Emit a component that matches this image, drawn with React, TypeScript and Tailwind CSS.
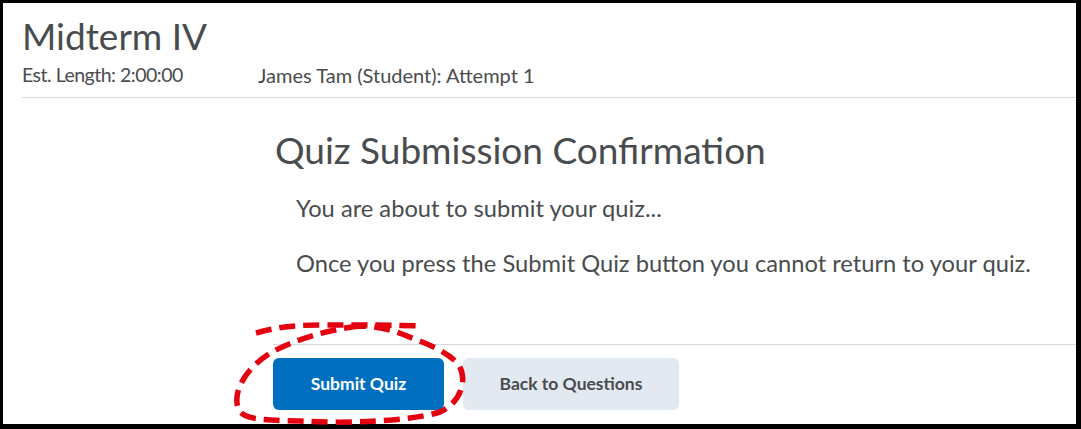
export default function App() {
  return (
    <div className="relative w-[1081px] h-[429px] bg-black pt-[3px] pl-[3px] pr-[5px] pb-[5px]">
      <div className="h-full w-full bg-white overflow-hidden flex flex-col text-[#494c4e] font-['Lato','Open_Sans',sans-serif]">
        <header className="pl-[19px] pt-[14px]">
          <h1 className="text-[37px] leading-none">Midterm IV</h1>
          <div className="flex mt-[9px] text-[19.5px] leading-[24px]">
            <span className="w-[236px] tracking-[-0.5px]">Est. Length: 2:00:00</span>
            <span className="text-[20px]">James Tam (Student): Attempt 1</span>
          </div>
          <div className="mt-[10px] h-px bg-[#d3d9e3]" />
        </header>
        <main className="pl-[270px]">
          <h2 className="mt-[33px] pl-[2px] text-[37px] leading-none">Quiz Submission Confirmation</h2>
          <div className="pl-[23px] text-[23.7px] leading-[28px]">
            <p className="mt-[26px]">You are about to submit your quiz...</p>
            <p className="mt-[27px]">Once you press the Submit Quiz button you cannot return to your quiz.</p>
          </div>
          <div className="mt-[67px] h-px bg-[#d3d9e3]" />
          <div className="flex gap-[19px] mt-[13px]">
            <button className="w-[171px] h-[52px] rounded-[6px] bg-[#006fbf] text-white font-bold text-[17.5px]">
              Submit Quiz
            </button>
            <button className="w-[216px] h-[52px] rounded-[6px] bg-[#e3e9f1] text-[#494c4e] font-bold text-[17.5px]">
              Back to Questions
            </button>
          </div>
        </main>
      </div>
      <svg
        className="absolute inset-0 pointer-events-none"
        width="1081"
        height="429"
        viewBox="0 0 1081 429"
        fill="none"
      >
        <path
          d="M256,333 C275,328 290,325 320,325 C360,325 395,325 422,326"
          stroke="#e3000f"
          strokeWidth="5.5"
          strokeDasharray="16 8"
        />
        <path
          d="M360,326 C325,330 295,340 272,352 C250,365 232,388 238,408 C242,420 262,420 300,421 C350,424 410,421 440,412 C462,402 468,378 458,364 C446,350 422,342 402,334 C388,329 375,326 360,326 Z"
          stroke="#e3000f"
          strokeWidth="5.5"
          strokeDasharray="16 8"
        />
      </svg>
    </div>
  );
}
